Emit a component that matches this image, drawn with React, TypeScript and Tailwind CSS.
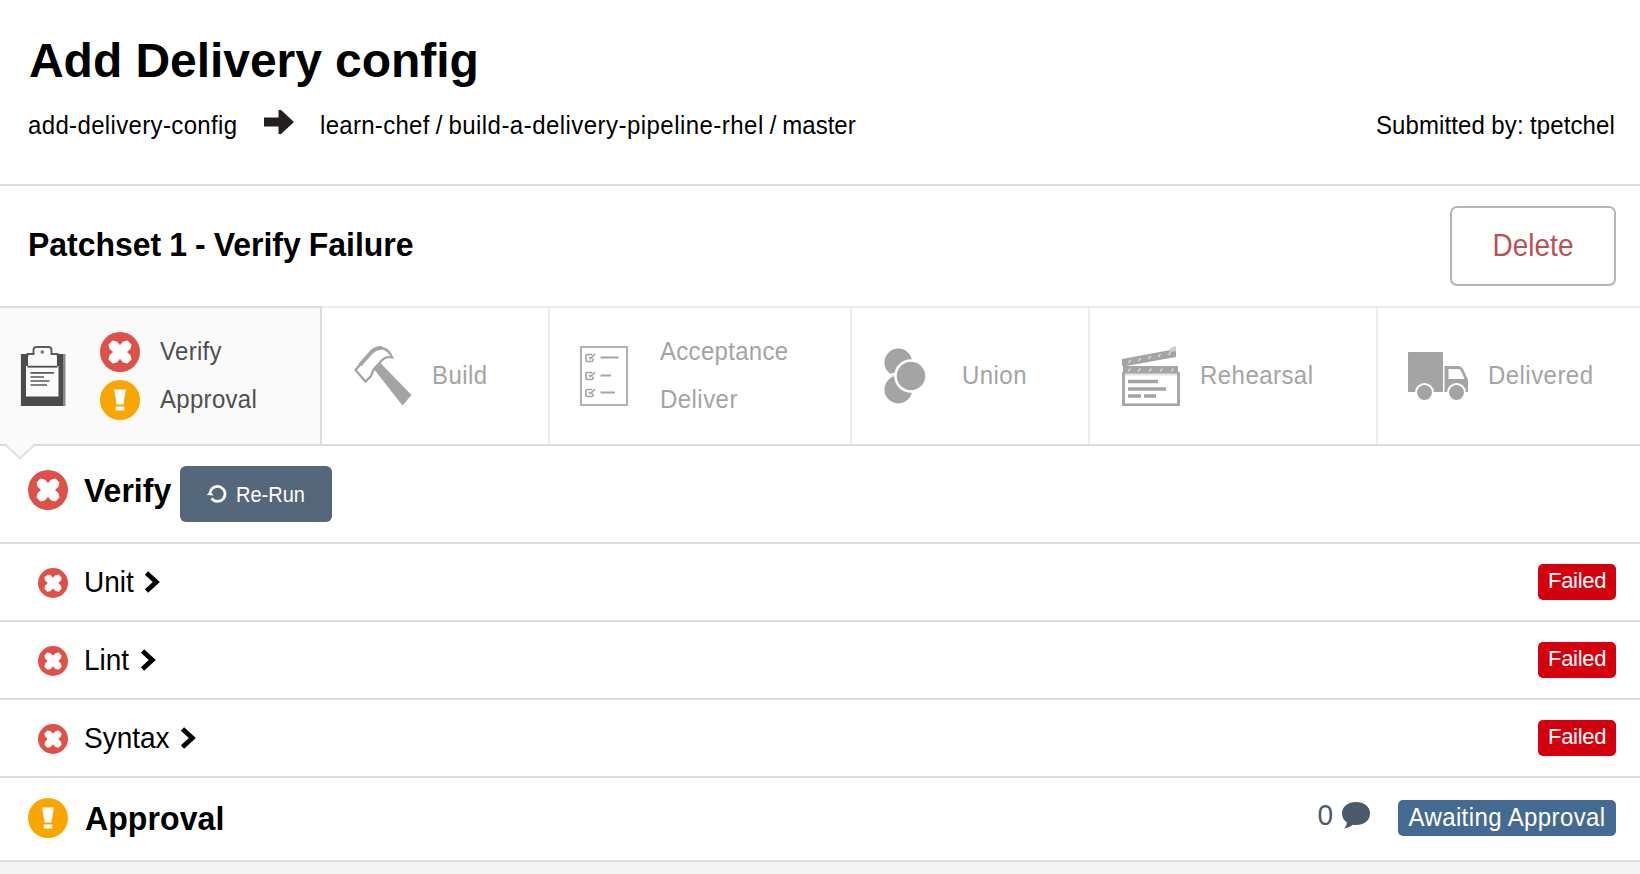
import type { ReactNode } from "react";

function T({ children, className = "" }: { children: ReactNode; className?: string }) {
  return (
    <span className={`inline-block origin-[0_calc(50%+0.3465em)] whitespace-nowrap ${className}`}>
      {children}
    </span>
  );
}

function FailIcon({ className }: { className: string }) {
  return (
    <svg viewBox="0 0 40 40" className={`shrink-0 ${className}`}>
      <circle cx="20" cy="20" r="20" fill="#df5148" />
      <path
        d="M8.500 12.500L12.500 8.500L16.800 9.500L20 13L23.200 9.500L27.500 8.500L31.500 12.500L30.500 16.800L27 20L30.500 23.200L31.500 27.500L27.500 31.500L23.200 30.500L20 27L16.800 30.500L12.500 31.500L8.500 27.500L9.500 23.200L13 20L9.500 16.800Z"
        fill="#fff"
      />
    </svg>
  );
}

function WarnIcon({ className = "" }: { className?: string }) {
  return (
    <svg viewBox="0 0 40 40" className={`size-10 shrink-0 ${className}`}>
      <circle cx="20" cy="20" r="20" fill="#f9a602" />
      <path d="M14.2 9.6H25.8L23.5 24.6H16.5ZM15.7 26.4H24.3V30.6H15.7Z" fill="#fff" />
    </svg>
  );
}

function ClipboardIcon() {
  return (
    <svg viewBox="0 0 46 60" className="h-[60px] w-[46px] shrink-0">
      <path d="M.9 8H43V60H.9Z" fill="#4b4b4b" />
      <path d="M43 8H45.500V60H43Z" fill="#8a8a8a" />
      <path d="M6 20H38.500V50.500H6Z" fill="#fafafa" />
      <path d="M8 20V11Q8 8 11 8H14V4Q14 1 17 1H28Q31 1 31 4V8H34Q37 8 37 11V20Z" fill="#fafafa" />
      <path d="M6.500 8H13.500V4Q13.500 1 16.500 1H28.500Q31.500 1 31.500 4V8H38.500" fill="none" stroke="#5a5a5a" strokeWidth="1.900" />
      <path d="M7.500 20.700H37.500" stroke="#4b4b4b" strokeWidth="1.800" />
      <circle cx="22.300" cy="6" r="1.800" fill="#777" />
      <path d="M10.500 26.800H34M10.500 31H24M10.500 35H29.500M10.500 39H27" stroke="#5a5a5a" strokeWidth="1.700" />
    </svg>
  );
}

function HammerIcon() {
  return (
    <svg viewBox="0 0 60 60" className="size-[60px] shrink-0">
      <path d="M19.500 22.500L26 16.500L57.500 49L48.500 59.500Z" fill="#a4a4a4" />
      <path
        d="M1.500 24L7 17.500L16 7.500Q20 2.500 27 2Q35 3 38 11.500Q31 9.500 26 16.500L20 23L16.500 30.500L11.500 35.500Z"
        fill="#fff"
        stroke="#a4a4a4"
        strokeWidth="2.300"
      />
      <path d="M6 19L17 6.500Q22 1.500 28 2" stroke="#a4a4a4" strokeWidth="4" fill="none" />
    </svg>
  );
}

function ChecklistIcon() {
  return (
    <svg viewBox="0 0 48 60" className="h-[60px] w-12 shrink-0" fill="none">
      <rect x="1" y="1" width="46" height="58" stroke="#b2b2b2" strokeWidth="2" />
      {[11.5, 29.5, 46.5].map((y) => (
        <g key={y} transform={`translate(0 ${y})`} stroke="#a4a4a4" strokeWidth="1.700">
          <path d="M12 -3H7.500Q6 -3 6 -1.500V2.500Q6 4 7.500 4H11.500Q13 4 13 2.500V1" />
          <path d="M9 -.5L10.500 1L15 -3.500" />
        </g>
      ))}
      <path d="M20.500 11.500H38.500M20.500 29.500H31M20.500 46.500H35" stroke="#a4a4a4" strokeWidth="2" />
    </svg>
  );
}

function UnionIcon() {
  return (
    <svg viewBox="0 0 42 56" className="h-14 w-[42px] shrink-0">
      <circle cx="14.300" cy="41.500" r="13.900" fill="#a4a4a4" />
      <circle cx="14.300" cy="14.500" r="13.900" fill="#a4a4a4" />
      <path d="M4 27.300L14 25" stroke="#fff" strokeWidth="2" />
      <circle cx="27" cy="28" r="16.800" fill="#fff" />
      <circle cx="27" cy="28" r="14.200" fill="#a4a4a4" />
    </svg>
  );
}

function ClapperIcon() {
  return (
    <svg viewBox="0 0 58 60" className="h-[60px] w-[58px] shrink-0">
      <path d="M0 13L54 3V11L4 20H0Z" fill="#a4a4a4" />
      <path d="M48 2L54 0V5L48 6Z" fill="#d0d0d0" />
      <path d="M1 20H56V28H1Z" fill="#a4a4a4" />
      <path d="M1.500 26V59H56.500V26" fill="none" stroke="#a4a4a4" strokeWidth="2.800" />
      <path d="M3 27.500H55V29.500H3Z" fill="#e4e4e4" />
      <path
        d="M6.500 17L8.500 14M16.500 15L18.500 12M26.500 13L28.500 10M36.500 11L38.500 8M46.500 9L48.500 6M6 25.500L8.500 22.500M16 25.500L18.500 22.500M27 25.500L29.500 22.500M38 25.500L40.500 22.500M49 25.500L51.500 22.500"
        stroke="#d2d2d2"
        strokeWidth="1.700"
      />
      <path d="M6 35.500H36M6 43H44M6 50H19M22 50H34" stroke="#a4a4a4" strokeWidth="3.400" />
    </svg>
  );
}

function TruckIcon() {
  return (
    <svg viewBox="0 0 60 48" className="h-12 w-[60px] shrink-0">
      <path d="M1 0H34Q35 0 35 1V40H0V1Q0 0 1 0Z" fill="#a4a4a4" />
      <path d="M36.500 14H50Q54 14 56 19L60 28V40H36.500Z" fill="#a4a4a4" />
      <path d="M40.500 17H50Q52.500 17 53.500 20L56.500 27H40.500Z" fill="#fff" />
      <circle cx="16.500" cy="40.500" r="9.500" fill="#fff" />
      <circle cx="48.500" cy="40.500" r="9.500" fill="#fff" />
      <circle cx="16.500" cy="40.500" r="7.500" fill="#a4a4a4" />
      <circle cx="48.500" cy="40.500" r="7.500" fill="#a4a4a4" />
    </svg>
  );
}

function Chevron() {
  return (
    <svg viewBox="0 0 16 22" className="h-[22px] w-4" fill="none">
      <path d="M2.500 2L12.300 11L2.500 20" stroke="#000" strokeWidth="4.800" />
    </svg>
  );
}

function Phase({ name, gap }: { name: string; gap: string }) {
  return (
    <div className="flex h-[78px] items-center border-b-2 border-[#d8dde0] pl-[38px] pr-6">
      <FailIcon className="mt-[1px] size-[30px]" />
      <T className={`ml-4 mt-[1px] scale-y-[1.07] text-[28px] leading-9 ${gap}`}>{name}</T>
      <Chevron />
      <div className="ml-auto flex h-9 w-[78px] items-center rounded-[5px] bg-[#d5000d] pl-[10px]">
        <T className="-mt-[3px] text-[22px] leading-7 tracking-[-0.3px] text-white">Failed</T>
      </div>
    </div>
  );
}

const label = "scale-y-[1.04] text-[24px] leading-[48px] tracking-[0.3px]";
const wideLabel = "scale-y-[1.04] text-[24px] leading-[48px] tracking-[0.45px]";

export default function App() {
  return (
    <main className="flex h-[874px] w-[1640px] flex-col overflow-hidden bg-[#f4f4f4] font-['Liberation_Sans',Arial,sans-serif] text-black">
      <header className="h-[186px] shrink-0 border-b-2 border-[#d8dde0] bg-white pl-7 pr-6 pt-[33px]">
        <h1 className="text-[48px] font-bold leading-[56px]">
          <T className="pl-px tracking-[-0.05px]">Add Delivery config</T>
        </h1>
        <div className="mt-[21px] flex h-8 items-center text-[24px] leading-8">
          <T className="w-[236px] scale-y-[1.04] tracking-[0.35px]">add-delivery-config</T>
          <svg viewBox="0 0 30 24" className="-mt-2 h-6 w-[30px]">
            <path d="M0 7.500H14.500V0H17L30 12L17 24H14.500V16.500H0Z" fill="#231f1f" />
          </svg>
          <T className="ml-[26px] scale-y-[1.04] tracking-[0.3px]">learn-chef</T>
          <T className="ml-[6px] scale-y-[1.04]">/</T>
          <T className="ml-[6px] scale-y-[1.04] tracking-[0.46px]">build-a-delivery-pipeline-rhel</T>
          <T className="ml-[6px] scale-y-[1.04]">/</T>
          <T className="ml-[6px] scale-y-[1.04]">master</T>
          <T className="ml-auto mr-[1px] scale-y-[1.04] tracking-[0.12px] [word-spacing:-0.5px]">Submitted by: tpetchel</T>
        </div>
      </header>

      <section className="flex h-[120px] shrink-0 items-center justify-between bg-white pl-7 pr-6">
        <h2 className="-mt-[2px] text-[32px] font-bold leading-10">
          <T className="scale-y-[1.04] tracking-[-0.03px] [word-spacing:-0.8px]">Patchset 1 - Verify Failure</T>
        </h2>
        <button className="h-20 w-[166px] rounded-[7px] border-2 border-[#b5b5b5] bg-white pt-[2px] text-[28px] leading-8 text-[#bd4f57]">
          <T className="scale-y-[1.09]">Delete</T>
        </button>
      </section>

      <nav className="relative flex h-[140px] shrink-0 border-b-2 border-[#d8dde0] bg-white text-[#a4a4a4]">
        <div className="flex h-[138px] w-[322px] items-center border-r-2 border-t-2 border-[#d8dde0] bg-[#fafafa] pl-5 text-[#4e4e4e]">
          <ClipboardIcon />
          <div className="ml-[34px] flex flex-col gap-2">
            <FailIcon className="size-10" />
            <WarnIcon />
          </div>
          <div className="ml-5 flex flex-col">
            <T className={label}>Verify</T>
            <T className={label}>Approval</T>
          </div>
        </div>
        <div className="flex w-[228px] items-center border-r-2 border-t-2 border-[#ebedee] pl-8">
          <HammerIcon />
          <T className={`ml-[18px] ${wideLabel}`}>Build</T>
        </div>
        <div className="flex w-[302px] items-center border-r-2 border-t-2 border-[#ebedee] pl-[30px]">
          <ChecklistIcon />
          <div className="ml-8 flex flex-col">
            <T className={label}>Acceptance</T>
            <T className={wideLabel}>Deliver</T>
          </div>
        </div>
        <div className="flex w-[238px] items-center border-r-2 border-t-2 border-[#ebedee] pl-8">
          <UnionIcon />
          <T className={`ml-9 ${wideLabel}`}>Union</T>
        </div>
        <div className="flex w-[288px] items-center border-r-2 border-t-2 border-[#ebedee] pl-8">
          <ClapperIcon />
          <T className={`ml-5 ${wideLabel}`}>Rehearsal</T>
        </div>
        <div className="flex w-[262px] items-center border-t-2 border-[#ebedee] pl-[30px]">
          <TruckIcon />
          <T className={`ml-5 ${wideLabel}`}>Delivered</T>
        </div>
        <svg viewBox="0 0 30 17" className="absolute left-[5px] top-[137px] h-[17px] w-[30px]">
          <path d="M0 0H30L15 15Z" fill="#fafafa" />
          <path d="M0 1.500L15 15.500L30 1.500" fill="none" stroke="#dde1e4" strokeWidth="2" />
        </svg>
      </nav>

      <section className="flex h-[98px] shrink-0 items-start border-b-2 border-[#d8dde0] bg-white pl-7 pt-5">
        <FailIcon className="mt-1 size-10" />
        <h2 className="ml-4 mt-[5px] w-24 text-[32px] font-bold leading-10">
          <T className="scale-y-[1.04]">Verify</T>
        </h2>
        <button className="flex h-14 w-[152px] items-center rounded-md bg-[#55677b] pl-[26px] text-white">
          <svg viewBox="0 0 22 22" className="size-[22px]" fill="none">
            <path d="M4.300 9A7.500 7.500 0 1 1 5.500 15.400" stroke="#fff" strokeWidth="2.700" />
            <path d="M.8 12L4.200 8L7.600 12.500Z" fill="#fff" />
          </svg>
          <T className="ml-2 mt-[1px] scale-y-[1.1] text-[20px] leading-7">Re-Run</T>
        </button>
      </section>

      <section className="shrink-0 bg-white">
        <Phase name="Unit" gap="w-[60px]" />
        <Phase name="Lint" gap="w-[56px]" />
        <Phase name="Syntax" gap="w-[96px]" />
      </section>

      <section className="flex h-[84px] shrink-0 items-center border-b-2 border-[#d8dde0] bg-white pl-7 pr-6">
        <WarnIcon className="-mt-[2px]" />
        <h2 className="ml-4 text-[32px] font-bold leading-10">
          <T className="scale-y-[1.04] pl-px tracking-[0.1px]">Approval</T>
        </h2>
        <div className="ml-auto flex items-center text-[#4a5a6a]">
          <T className="-mt-[6px] scale-y-[1.07] text-[28px] leading-9">0</T>
          <svg viewBox="0 0 30 28" className="-mt-[8px] ml-2 h-7 w-[30px]">
            <path d="M15 1C23 1 29 5.500 29 12.500S23 24 15 24Q13.500 24 12 23.700Q8 27 3 27.500Q5.500 25 6 21.500Q1 18 1 12.500C1 5.500 7 1 15 1Z" fill="#4a5a6a" />
          </svg>
        </div>
        <div className="-mt-[2px] ml-[27px] flex h-9 w-[218px] items-center justify-center rounded-[5px] bg-[#456a91] text-white">
          <T className="scale-y-[1.04] text-[24px] leading-8 tracking-[0.4px]">Awaiting Approval</T>
        </div>
      </section>
    </main>
  );
}
